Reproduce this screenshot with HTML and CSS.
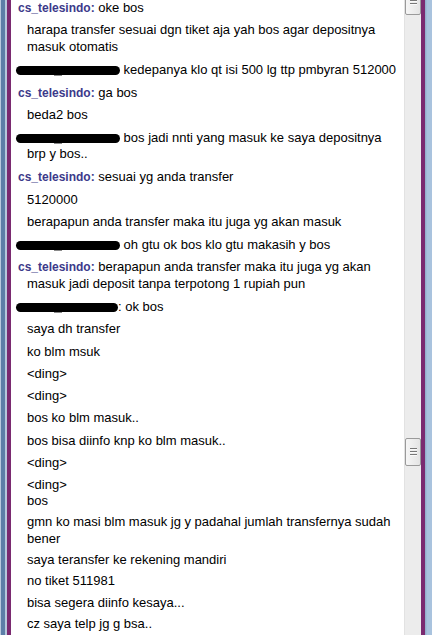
FILE: index.html
```html
<!DOCTYPE html>
<html>
<head>
<meta charset="utf-8">
<link rel="stylesheet" href="styles.css">
</head>
<body>
<div class="window">
  <div class="frame-left">
    <div class="fl-a"></div><div class="fl-b"></div><div class="fl-c"></div><div class="fl-d"></div>
  </div>
  <div class="chat">
    <div class="part">
      <div class="row sender"><span class="name">cs_telesindo:</span> oke bos</div>
      <div class="row">harapa transfer sesuai dgn tiket aja yah bos agar depositnya masuk otomatis</div>
      <div class="row hidden"><span class="blob"></span> kedepanya klo qt isi 500 lg ttp pmbyran 512000</div>
      <div class="row sender"><span class="name">cs_telesindo:</span> ga bos</div>
      <div class="row">beda2 bos</div>
      <div class="row hidden"><span class="blob"></span> bos jadi nnti yang masuk ke saya depositnya brp y bos..</div>
      <div class="row sender"><span class="name">cs_telesindo:</span> sesuai yg anda transfer</div>
      <div class="row">5120000</div>
      <div class="row">berapapun anda transfer maka itu juga yg akan masuk</div>
      <div class="row hidden"><span class="blob"></span> oh gtu ok bos klo gtu makasih y bos</div>
      <div class="row sender"><span class="name">cs_telesindo:</span> berapapun anda transfer maka itu juga yg akan masuk jadi deposit tanpa terpotong 1 rupiah pun</div>
      <div class="row hidden"><span class="blob short"></span>: ok bos</div>
      <div class="row">saya dh transfer</div>
      <div class="row">ko blm msuk</div>
      <div class="row">&lt;ding&gt;</div>
      <div class="row">&lt;ding&gt;</div>
      <div class="row">bos ko blm masuk..</div>
      <div class="row">bos bisa diinfo knp ko blm masuk..</div>
      <div class="row">&lt;ding&gt;</div>
      <div class="row">&lt;ding&gt;</div>
    </div>
    <div class="part later">
      <div class="row">bos</div>
      <div class="row">gmn ko masi blm masuk jg y padahal jumlah transfernya sudah bener</div>
      <div class="row">saya teransfer ke rekening mandiri</div>
      <div class="row">no tiket 511981</div>
      <div class="row">bisa segera diinfo kesaya...</div>
      <div class="row">cz saya telp jg g bsa..</div>
    </div>
  </div>
  <div class="scrollbar">
    <div class="thumb thumb-top"><span class="grip"></span><span class="grip"></span><span class="grip"></span></div>
    <div class="thumb thumb-mid"><span class="grip"></span><span class="grip"></span><span class="grip"></span></div>
  </div>
  <div class="frame-right">
    <div class="fr-a"></div><div class="fr-b"></div>
  </div>
</div>
</body>
</html>
```

FILE: styles.css
```css
html, body {
  margin: 0;
  padding: 0;
  background: #ffffff;
}
.window {
  display: flex;
  width: 432px;
  height: 635px;
  overflow: hidden;
}
.frame-left {
  display: flex;
  width: 11px;
  flex: none;
}
.fl-a { width: 1px; background: #b9cade; }
.fl-b { width: 4px; background: #5d7fa8; }
.fl-c { width: 2px; background: #b6c9dc; }
.fl-d { width: 4px; background: #7a2a70; }
.chat {
  flex: 1;
  padding: 0 6px 0 0;
  background: #ffffff;
  font-family: "Liberation Sans", Arial, sans-serif;
  font-size: 13px;
  color: #000000;
  overflow: hidden;
}
.row {
  line-height: 16.7px;
  padding-left: 16px;
  margin-bottom: 5.55px;
}
.part > .row.sender:not(:first-child),
.part > .row.hidden {
  padding-top: 0.6px;
}
.later {
  margin-top: -6.5px;
}
.later .row {
  margin-bottom: 4.6px;
}
.row.sender {
  text-indent: -9px;
}
.row.hidden {
  text-indent: -11px;
}
.name {
  font-weight: bold;
  font-size: 12px;
  color: #3c3a8a;
}
.blob {
  display: inline-block;
  position: relative;
  width: 104px;
  height: 9px;
  background: #000000;
  border-radius: 5px;
  vertical-align: -1px;
}
.blob.short {
  width: 102px;
}
.blob::after {
  content: "";
  position: absolute;
  left: 38px;
  top: 9px;
  width: 8px;
  height: 1px;
  background: #8a8a8a;
}
.scrollbar {
  width: 16px;
  flex: none;
  background: #ececec;
  border-left: 1px solid #e2e2e2;
  position: relative;
}
.thumb {
  position: absolute;
  left: 0;
  width: 14px;
  border: 1px solid #9a9a9a;
  border-radius: 2px;
  background: linear-gradient(to right, #f6f6f6, #e4e4e4);
  display: flex;
  flex-direction: column;
  align-items: center;
  justify-content: center;
  gap: 1px;
}
.thumb-top {
  top: -13px;
  height: 26px;
}
.thumb-mid {
  top: 438px;
  height: 26px;
}
.grip {
  display: block;
  width: 7px;
  height: 1px;
  border-bottom: 1px solid #fafafa;
  background: #777777;
}
.frame-right {
  display: flex;
  width: 11px;
  flex: none;
}
.fr-a { width: 4px; background: #7a2a70; }
.fr-b { width: 7px; background: linear-gradient(to right, #8ea8c6, #a9c3de 30%, #a9c3de); }
```
